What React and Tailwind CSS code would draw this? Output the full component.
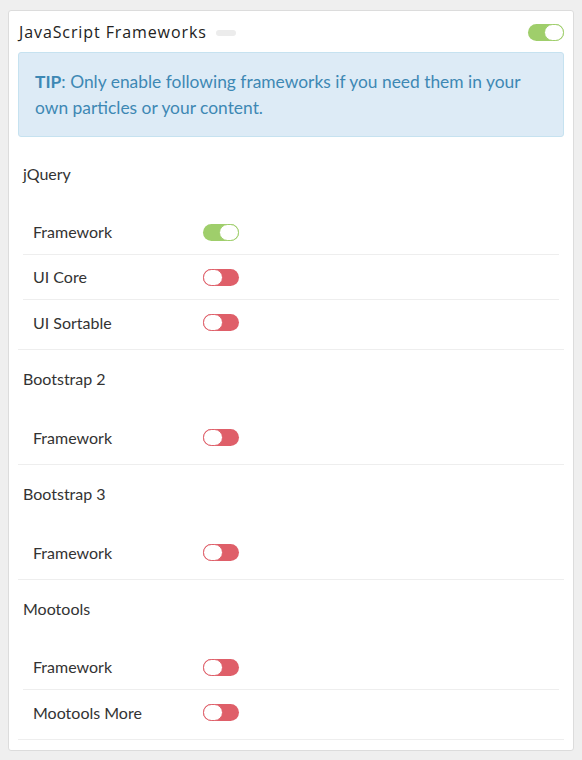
import React from 'react';

const groups = [
  { name: 'jQuery', items: [['Framework', true], ['UI Core', false], ['UI Sortable', false]] },
  { name: 'Bootstrap 2', items: [['Framework', false]] },
  { name: 'Bootstrap 3', items: [['Framework', false]] },
  { name: 'Mootools', items: [['Framework', false], ['Mootools More', false]] },
];

const Toggle = ({ on }) => (
  <div
    className={`flex h-[17px] w-[36px] rounded-full ${on ? 'justify-end bg-[#9fce6b]' : 'justify-start bg-[#df5f69]'}`}
  >
    <div className={`h-[17px] w-[20px] rounded-full border bg-white ${on ? 'border-[#9fce6b]' : 'border-[#df5f69]'}`} />
  </div>
);

export default function App() {
  return (
    <div className="min-h-[760px] bg-[#efefef] px-[8px] pt-[10px] pb-[10px] font-['Lato','Liberation_Sans',sans-serif] text-[#333]">
      <div className="rounded-[3px] border border-[#dcdcdc] bg-white px-[9px] pb-[10px]">
        {/* header */}
        <div className="flex h-[41px] items-center pl-[1px]">
          <h2 className="font-['Open_Sans','Liberation_Sans',sans-serif] text-[16px] leading-[20px] tracking-[0.9px] text-[#222]">
            JavaScript Frameworks
          </h2>
          <span className="ml-[9px] mt-[3px] h-[6px] w-[20px] rounded-full bg-[#ececec]" />
          <div className="ml-auto mt-[2px]">
            <Toggle on />
          </div>
        </div>

        {/* tip */}
        <p className="mb-[8px] rounded-[3px] border border-[#c6e2f0] bg-[#ddebf6] px-[16px] pt-[16px] pb-[15px] text-[17.4px] leading-[26px] text-[#3d88b4]">
          <b>TIP</b>: Only enable following frameworks if you need them in your own particles or your content.
        </p>

        {groups.map((g) => (
          <div key={g.name} className="border-b border-[#eeeeee] pb-[4px]">
            <div className="pl-[5px] pt-[19px] pb-[26px] text-[16px] leading-[20px]">{g.name}</div>
            {g.items.map(([label, on], i) => (
              <div
                key={label}
                className={`mx-[5px] flex h-[45px] items-center pl-[10px] ${i < g.items.length - 1 ? 'border-b border-[#eeeeee]' : ''}`}
              >
                <span className="w-[170px] text-[16px] leading-[20px]">{label}</span>
                <Toggle on={on} />
              </div>
            ))}
          </div>
        ))}
      </div>
    </div>
  );
}
